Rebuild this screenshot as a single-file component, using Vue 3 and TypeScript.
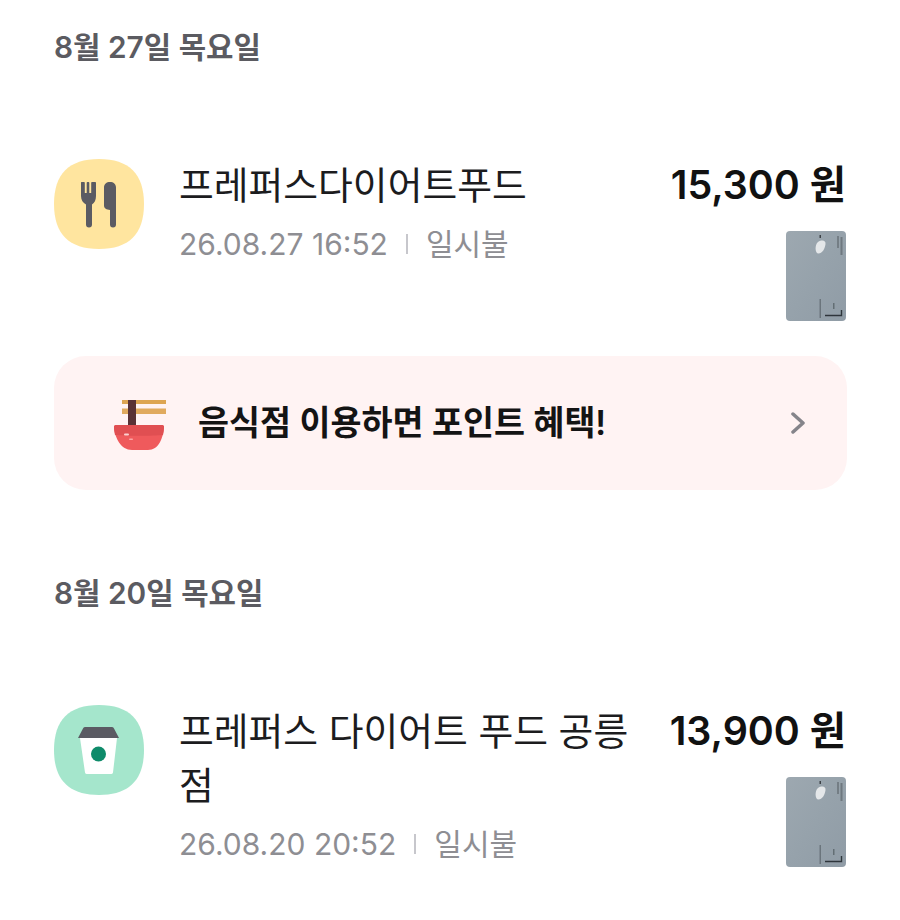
<template>
  <div class="page">
    <template v-for="(group, index) in groups" :key="group.date">
      <h2 class="date" :class="{ later: index > 0 }">{{ group.date }}</h2>
      <div class="row">
        <svg class="icon" viewBox="0 0 90 90">
          <path :fill="group.iconColor" d="M45 0C75 0 90 15 90 45C90 75 75 90 45 90C15 90 0 75 0 45C0 15 15 0 45 0Z" />
          <template v-if="group.kind === 'food'">
            <path fill="#5b5b63" d="M27.500 23H30a.8.8 0 0 1 .8.8V34H32.700V23.800a.8.800 0 0 1 .8-.8h1a.8.800 0 0 1 .8.800V34H37.200V23.800a.8.800 0 0 1 .8-.8H41.200a.8.800 0 0 1 .8.800V37C42 41 40.500 44 38 45.500V65.500a3 3 0 0 1-6 0V45.500C29 44 27 41 27 37V23.500a.5.500 0 0 1 .5-.5Z" />
            <path fill="#5b5b63" d="M56 23C59.500 23 62 25 62 28.500V65.500a3 3 0 0 1-6 0V51C52.500 50.500 50 49.500 50 46.500V28.500C50 25 52.500 23 56 23Z" />
          </template>
          <template v-else>
            <path fill="#fff" d="M26 33H63L59 67.500a2 2 0 0 1-2 1.500H33a2 2 0 0 1-2-1.500Z" />
            <path fill="#5b5b63" d="M31 22H58a2 2 0 0 1 2 1.500L65 33H24L29 23.500a2 2 0 0 1 2-1.500Z" />
            <circle cx="44.500" cy="49" r="7.500" fill="#0e8b6a" />
          </template>
        </svg>
        <div class="info">
          <div class="title">{{ group.title }}</div>
          <div class="meta">
            <span>{{ group.time }}</span>
            <i class="sep"></i>
            <span>일시불</span>
          </div>
        </div>
        <div class="side">
          <div class="amount">{{ group.amount }}</div>
          <svg class="card" viewBox="0 0 60 90">
            <defs>
              <linearGradient :id="'metal' + index" x1="0" y1="0" x2="1" y2="1">
                <stop offset="0" stop-color="#9da8b0" />
                <stop offset="0.5" stop-color="#96a2ab" />
                <stop offset="1" stop-color="#909ca6" />
              </linearGradient>
              <filter :id="'soft' + index">
                <feGaussianBlur stdDeviation="0.6" />
              </filter>
            </defs>
            <rect width="60" height="90" rx="4" :fill="'url(#metal' + index + ')'" />
            <g :filter="'url(#soft' + index + ')'">
              <path fill="#e4e7e9" d="M32 11C36 8.500 40 9.500 39.500 13C39 18 36 22.500 32.500 22.500C29 22.500 28.500 14 32 11Z" />
              <rect x="33.500" y="4" width="1.500" height="3" fill="#3c4247" />
              <rect x="51" y="5" width="2" height="12" fill="#5e666d" opacity="0.6" />
              <rect x="54.500" y="6" width="2" height="18" fill="#5e666d" opacity="0.7" />
              <rect x="33.500" y="68" width="1.500" height="19" fill="#5a6269" opacity="0.7" />
              <rect x="47" y="72" width="1.500" height="6" fill="#50585e" opacity="0.7" />
              <path fill="none" stroke="#2f353a" stroke-width="1.400" d="M39 84.500H55.500V79" />
            </g>
          </svg>
        </div>
      </div>
      <div v-if="group.banner" class="banner">
        <svg class="bowl" viewBox="0 0 54 50">
          <rect x="8" y="0" width="44" height="4" fill="#dda552" />
          <rect x="8" y="8.500" width="44" height="5.500" fill="#e0aa5e" />
          <rect x="14" y="0" width="8" height="26" fill="#593236" />
          <path fill="#ef5a5c" d="M2 25H48a2 2 0 0 1 2 2.500C49 38 45 50 34 50H18C7 50 1 38 0 27.500A2 2 0 0 1 2 25Z" />
          <path fill="#e04f52" d="M2 25H48a2 2 0 0 1 2 2.500C49.900 30 49.500 33 49 35C40 36 10 36 1 35C.5 33 .1 30 0 27.500A2 2 0 0 1 2 25Z" />
          <rect x="10" y="33.500" width="5" height="2" rx="1" fill="#fbd0cf" />
          <rect x="15" y="38.500" width="4" height="1.500" rx=".7" fill="#f9a5a4" />
        </svg>
        <span class="banner-text">음식점 이용하면 포인트 혜택!</span>
        <svg class="chevron" viewBox="0 0 14 22">
          <path fill="none" stroke="#85848a" stroke-width="3.500" stroke-linecap="round" stroke-linejoin="round" d="M2 2L12 11L2 20" />
        </svg>
      </div>
    </template>
  </div>
</template>

<script setup lang="ts">
interface Group {
  date: string
  kind: 'food' | 'cafe'
  iconColor: string
  title: string
  time: string
  amount: string
  banner: boolean
}

const groups: Group[] = [
  {
    date: '8월 27일 목요일',
    kind: 'food',
    iconColor: '#ffe59f',
    title: '프레퍼스다이어트푸드',
    time: '26.08.27 16:52',
    amount: '15,300 원',
    banner: true,
  },
  {
    date: '8월 20일 목요일',
    kind: 'cafe',
    iconColor: '#a5e6cc',
    title: '프레퍼스 다이어트 푸드 공릉점',
    time: '26.08.20 20:52',
    amount: '13,900 원',
    banner: false,
  },
]
</script>

<style scoped>
.page {
  height: 920px;
  overflow: hidden;
  box-sizing: border-box;
  padding: 27px 54px 0;
  background: #fff;
  font-family: "Inter", "Noto Sans CJK KR", sans-serif;
}

.date {
  margin: 0;
  font-size: 29.800px;
  line-height: 40px;
  font-weight: 600;
  color: #5b5b61;
}

.date.later {
  margin-top: 83px;
}

.row {
  display: flex;
  align-items: flex-start;
  margin-top: 92px;
}

.icon {
  width: 90px;
  height: 90px;
  flex: none;
}

.info {
  flex: 1;
  min-width: 0;
  margin-left: 36px;
}

.title {
  margin-top: -1px;
  margin-left: -1px;
  font-size: 37.800px;
  line-height: 54px;
  color: #1c1c1e;
}

.meta {
  display: flex;
  align-items: center;
  margin-top: 8px;
  margin-left: -1px;
  font-size: 30px;
  line-height: 48px;
  color: #8e8e93;
}

.sep {
  width: 2px;
  height: 20px;
  margin: 0 18px;
  background: #c7c7cc;
}

.side {
  display: flex;
  flex-direction: column;
  align-items: flex-end;
  flex: none;
  margin-left: 40px;
}

.amount {
  margin-top: 1px;
  font-size: 39.400px;
  line-height: 50px;
  font-weight: 600;
  color: #111;
  white-space: nowrap;
}

.card {
  display: block;
  width: 60px;
  height: 90px;
  margin-top: 21px;
}

.banner {
  display: flex;
  align-items: center;
  height: 134px;
  margin-top: 35px;
  margin-right: -1px;
  padding: 0 42px 0 60px;
  border-radius: 32px;
  background: #fff3f3;
}

.bowl {
  width: 54px;
  height: 50px;
  margin-top: 4px;
  flex: none;
}

.banner-text {
  flex: 1;
  margin-left: 30px;
  margin-bottom: 5px;
  font-size: 33.700px;
  font-weight: 600;
  color: #141414;
}

.chevron {
  width: 14px;
  height: 22px;
  flex: none;
}
</style>
